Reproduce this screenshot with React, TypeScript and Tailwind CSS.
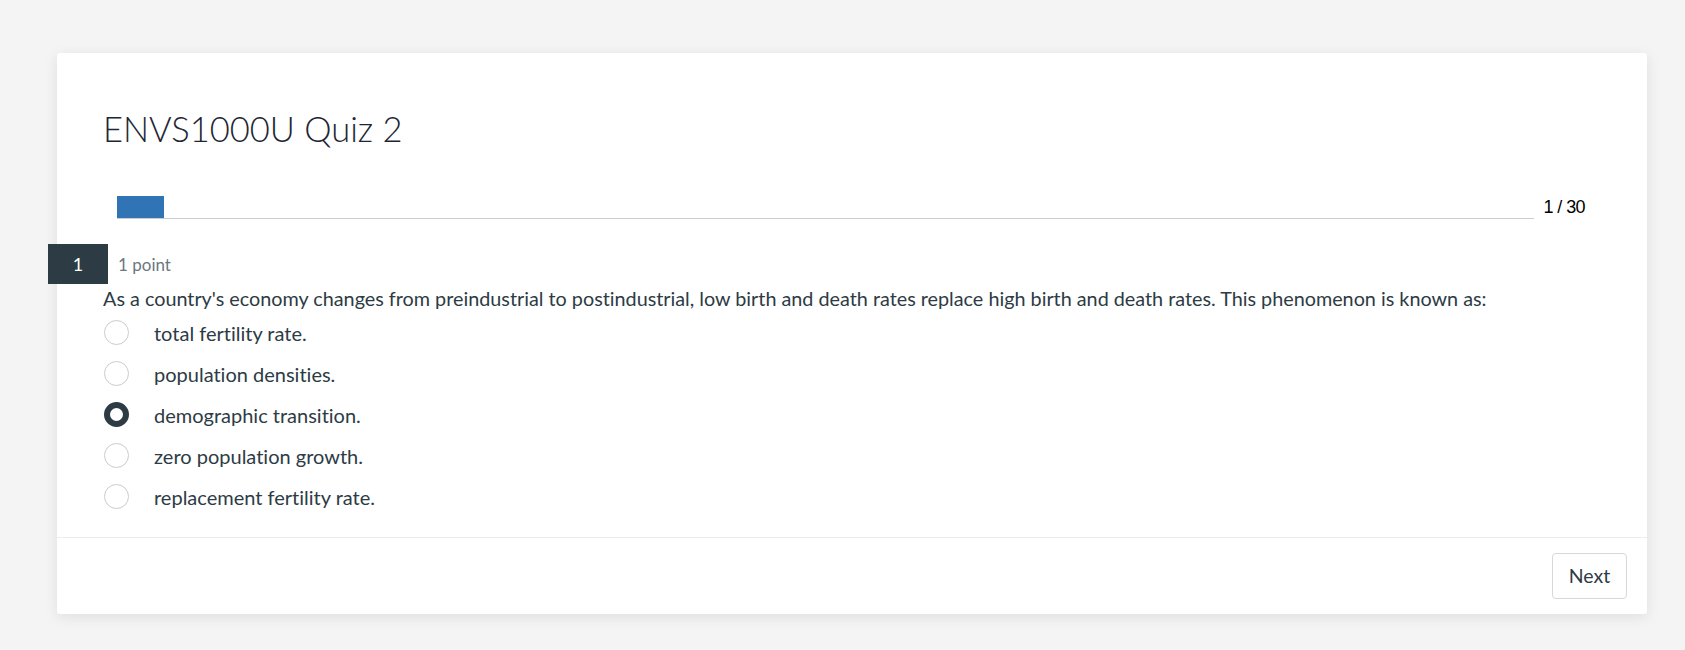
const options = [
  "total fertility rate.",
  "population densities.",
  "demographic transition.",
  "zero population growth.",
  "replacement fertility rate.",
];

const selected = 2;

export default function App() {
  return (
    <div className="min-h-[650px] bg-[#f4f4f4] pt-[53px] pl-[57px] font-['Lato','Noto_Sans',sans-serif] text-[#2d3b45] [font-variant-ligatures:none]">
      <div className="w-[1590px] rounded-[3px] bg-white shadow-[0_3px_14px_rgba(0,0,0,0.09)]">
        <div className="px-[46px] pt-[54px] pb-[20px]">
          <h1 className="text-[34.5px] font-light leading-[44px] text-[#1e2633]">ENVS1000U Quiz 2</h1>

          <div className="mt-[45px] ml-[14px] flex items-end">
            <div className="flex h-[23px] flex-1 border-b border-[#c7cdd1]">
              <div className="h-[22px] w-[47px] bg-[#3174b6]" />
            </div>
            <div className="ml-[10px] mr-[16px] self-center pb-[2px] font-['Liberation_Sans',Arial,sans-serif] text-[18px] leading-[20px] tracking-[-0.6px] text-black">
              1 / 30
            </div>
          </div>

          <div className="mt-[25px] -ml-[55px] flex h-[40px] items-center">
            <div className="flex h-[40px] w-[60px] items-center justify-center bg-[#2d3b45] text-[18px] text-white">1</div>
            <span className="ml-[10px] pt-[2px] text-[17px] text-[#6b7780]">1 point</span>
          </div>

          <p className="mt-[1px] text-[19.8px] leading-[26px]">
            As a country's economy changes from preindustrial to postindustrial, low birth and death rates replace high birth and death rates. This phenomenon is known as:
          </p>

          <div className="mt-[1px] flex flex-col">
            {options.map((o, i) => (
              <label key={o} className="flex h-[41px] items-center pl-[1px]">
                {i === selected ? (
                  <span className="h-[25px] w-[25px] rounded-full border-[6.5px] border-[#2d3b45] bg-white" />
                ) : (
                  <span className="h-[25px] w-[25px] rounded-full border border-[#c7cdd1] bg-white" />
                )}
                <span className="ml-[25px] text-[20px]">{o}</span>
              </label>
            ))}
          </div>
        </div>

        <div className="flex justify-end border-t border-[#ececec] pt-[15px] pr-[20px] pb-[15px]">
          <button className="h-[46px] w-[75px] rounded-[4px] border border-[#d5d9dc] bg-white text-[19.5px] text-[#2d3b45]">
            Next
          </button>
        </div>
      </div>
    </div>
  );
}
